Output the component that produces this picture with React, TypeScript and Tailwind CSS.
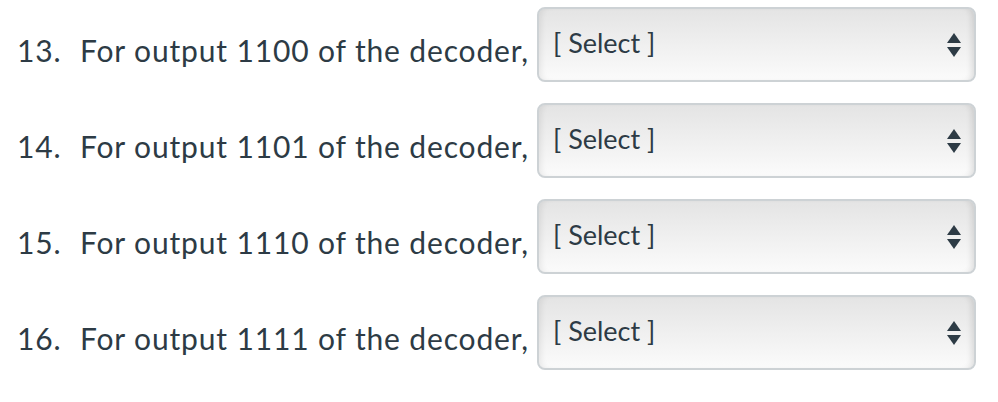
import React from 'react';

const questions = [
    { num: '13.', output: '1100' },
    { num: '14.', output: '1101' },
    { num: '15.', output: '1110' },
    { num: '16.', output: '1111' },
];

function SelectBox() {
    return (
        <div className="relative w-[439px] h-[75px] rounded-[8px] border-2 border-[#cdd2d5] bg-gradient-to-b from-[#e4e4e4] to-[#fbfbfb] shadow-[inset_-6px_0_6px_-4px_rgba(0,0,0,0.12),inset_6px_0_6px_-4px_rgba(0,0,0,0.08)] flex items-center">
            <span className="pl-[14px] pb-[2px] text-[27px] text-[#2d3b45]">[ Select ]</span>
            <svg className="absolute right-[13px] top-[24px]" width="14" height="26" viewBox="0 0 14 26">
                <polygon points="7,0 14,10 0,10" fill="#2d3b45" />
                <polygon points="0,14 14,14 7,24" fill="#2d3b45" />
            </svg>
        </div>
    );
}

export default function App() {
    return (
        <div className="w-[998px] h-[402px] bg-white pt-[7px] text-[#2d3b45]" style={{ fontFamily: 'Lato, "Open Sans", sans-serif' }}>
            {questions.map((q) => (
                <div key={q.num} className="flex items-start h-[96px]">
                    <div className="flex w-[537px] pl-[17px] pt-[25px] text-[30px] leading-[36px] tracking-[0.85px] whitespace-nowrap">
                        <span className="w-[63px]">{q.num}</span>
                        <span>For output {q.output} of the decoder,</span>
                    </div>
                    <SelectBox />
                </div>
            ))}
        </div>
    );
}
